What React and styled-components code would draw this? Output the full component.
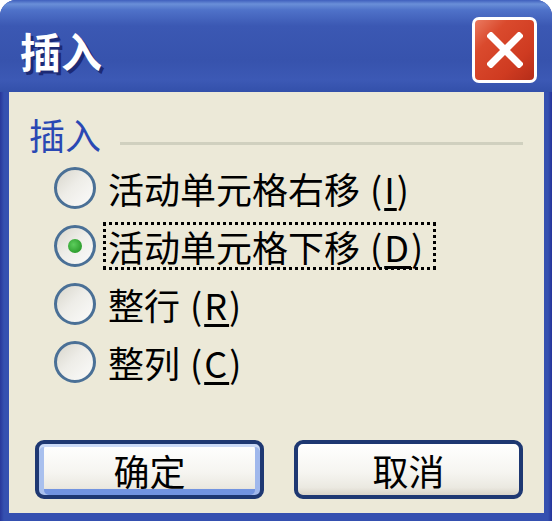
import React from 'react';
import styled, { createGlobalStyle } from 'styled-components';

const GlobalStyle = createGlobalStyle`
  html, body {
    margin: 0;
    padding: 0;
    background: #ffffff;
  }
  body {
    font-family: "Noto Sans CJK SC", "Noto Sans", sans-serif;
  }
`;

const options = [
    { label: '活动单元格右移', key: 'I' },
    { label: '活动单元格下移', key: 'D', checked: true },
    { label: '整行', key: 'R' },
    { label: '整列', key: 'C' },
];

const InsertDialog = () => {
    return (
        <>
            <GlobalStyle />
            <Window>
                <TitleBar>
                    <Title>插入</Title>
                    <CloseButton>
                        <svg width="36" height="36" viewBox="0 0 36 36">
                            <path d="M4 4 L32 32 M32 4 L4 32" stroke="#fff" strokeWidth="7" strokeLinecap="square" />
                        </svg>
                    </CloseButton>
                </TitleBar>
                <Client>
                    <GroupHeader>
                        <GroupLabel>插入</GroupLabel>
                        <GroupLine />
                    </GroupHeader>
                    <OptionList>
                        {options.map((opt) => (
                            <Option key={opt.key}>
                                <Radio $checked={opt.checked} />
                                <OptionLabel $focused={opt.checked}>
                                    {opt.label}
                                    <Accel>
                                        (<u>{opt.key}</u>)
                                    </Accel>
                                </OptionLabel>
                            </Option>
                        ))}
                    </OptionList>
                    <ButtonRow>
                        <Button $default>确定</Button>
                        <Button>取消</Button>
                    </ButtonRow>
                </Client>
            </Window>
        </>
    );
};

const Window = styled.div`
    width: 552px;
    height: 521px;
    box-sizing: border-box;
    display: flex;
    flex-direction: column;
    background: linear-gradient(to right, #28379a 0px, #3550b0 4px, #3550b0 calc(100% - 4px), #25339a 100%);
    border-radius: 16px 16px 0 0;
    overflow: hidden;
`;

const TitleBar = styled.div`
    height: 92px;
    flex: none;
    box-sizing: border-box;
    display: flex;
    align-items: center;
    justify-content: space-between;
    padding: 8px 15px 0 20px;
    background: linear-gradient(
        to bottom,
        #3f5fbd 0px,
        #6a8fd8 4px,
        #4f72c9 10px,
        #3b58b3 26px,
        #3753ad 60px,
        #3c59b5 80px,
        #3350aa 92px
    );
`;

const Title = styled.div`
    font-size: 41px;
    font-weight: 700;
    line-height: 44px;
    color: #ffffff;
    text-shadow: 3px 3px 0 #1c2a75;
`;

const CloseButton = styled.div`
    width: 65px;
    height: 66px;
    box-sizing: border-box;
    border: 3px solid #ffffff;
    border-radius: 7px;
    background: linear-gradient(135deg, #ea7a60 0%, #da4a2d 28%, #cf3b21 70%, #b52d19 100%);
    display: flex;
    align-items: center;
    justify-content: center;
`;

const Client = styled.div`
    flex: 1;
    margin: 0 8px 8px 9px;
    background: #ece9d8;
    display: flex;
    flex-direction: column;
    padding: 22px 21px 14px 20px;
`;

const GroupHeader = styled.div`
    display: flex;
    height: 40px;
`;

const GroupLabel = styled.span`
    font-size: 36px;
    line-height: 40px;
    color: #2a48b4;
    margin-right: 19px;
`;

const GroupLine = styled.div`
    flex: 1;
    height: 3px;
    margin-top: 28px;
    background: #d0d0bf;
`;

const OptionList = styled.div`
    display: flex;
    flex-direction: column;
    gap: 16px;
    margin: 13px 0 0 25px;
`;

const Option = styled.div`
    display: flex;
    align-items: center;
    height: 42px;
    gap: 7px;
`;

const Radio = styled.span`
    width: 42px;
    height: 42px;
    flex: none;
    box-sizing: border-box;
    border-radius: 50%;
    border: 3px solid #4a7096;
    background: linear-gradient(135deg, #d8d6cc 0%, #eeede8 45%, #fbfbfa 100%);
    display: flex;
    align-items: center;
    justify-content: center;
    &::after {
        content: '';
        width: 14px;
        height: 14px;
        border-radius: 50%;
        background: radial-gradient(circle at 40% 40%, #5ccd5c 0%, #2f9f2f 70%);
        display: ${(props) => (props.$checked ? 'block' : 'none')};
    }
`;

const OptionLabel = styled.span`
    font-size: 36px;
    line-height: 42px;
    color: #000000;
    padding: 0 8px 0 2px;
    border: 3px dotted ${(props) => (props.$focused ? '#000000' : 'transparent')};
    white-space: nowrap;
`;

const Accel = styled.span`
    margin-left: 10px;
    letter-spacing: 2px;
    u {
        text-decoration-thickness: 3px;
        text-underline-offset: 4px;
    }
`;

const ButtonRow = styled.div`
    margin: auto 0 0 6px;
    display: flex;
    justify-content: space-between;
`;

const Button = styled.button`
    width: 229px;
    height: 59px;
    box-sizing: border-box;
    padding: 0;
    border: 4px solid #1e3872;
    border-radius: 9px;
    background: linear-gradient(to bottom, #ffffff 0%, #f6f5f1 55%, #ebe9e1 85%, #d9d4c8 100%);
    font-family: "Noto Sans CJK SC", sans-serif;
    font-size: 36px;
    line-height: 40px;
    color: #000000;
    box-shadow: ${(props) =>
        props.$default
            ? 'inset 0 3px 0 #cbdaf6, inset 5px 0 0 #a9c0ee, inset -5px 0 0 #a0b8ec, inset 0 -6px 0 #7294e0'
            : 'none'};
`;

export default InsertDialog;
